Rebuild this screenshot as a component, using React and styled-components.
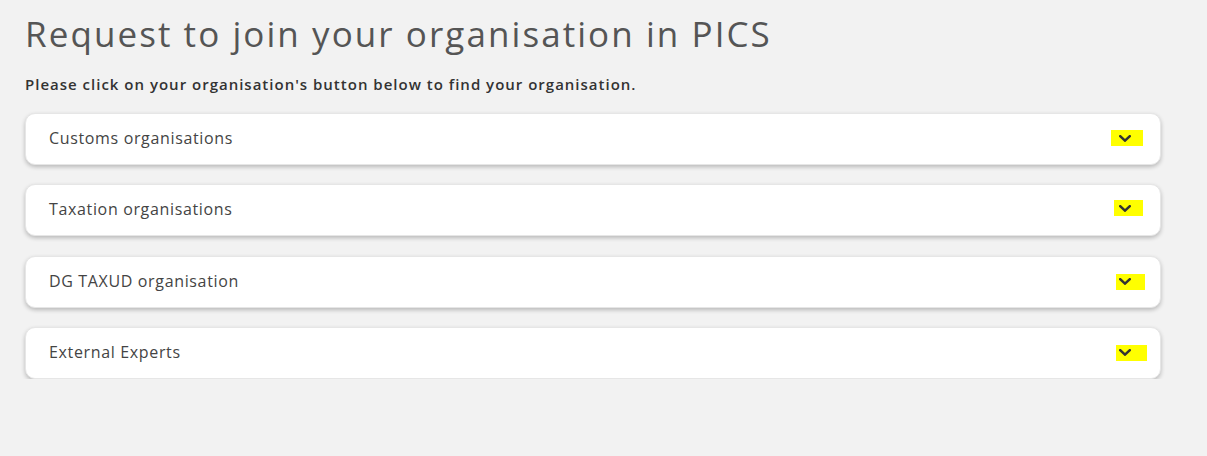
import React from "react";
import styled, { createGlobalStyle } from "styled-components";

const Global = createGlobalStyle`
  html, body { margin: 0; padding: 0; background: #f2f2f2; }
  body { font-family: "Open Sans", "Liberation Sans", sans-serif; }
`;

const Page = styled.main`
  padding: 12px 0 0 25px;
  width: 1136px;
`;

const Title = styled.h1`
  margin: 0;
  font-family: "Open Sans", sans-serif;
  font-weight: 400;
  font-size: 35px;
  line-height: 44px;
  letter-spacing: 2.07px;
  color: #555555;
`;

const Lead = styled.p`
  margin: 18px 0 0;
  font-family: "Open Sans", sans-serif;
  font-weight: 600;
  font-size: 15px;
  line-height: 20px;
  letter-spacing: 1px;
  color: #333333;
`;

const List = styled.div`
  margin-top: 19px;
  display: flex;
  flex-direction: column;
  gap: 19.3px;
`;

const Card = styled.button`
  box-sizing: border-box;
  width: 100%;
  height: 52px;
  display: flex;
  align-items: center;
  justify-content: space-between;
  padding: 0 0 2px 23px;
  background: #ffffff;
  border: 1px solid #e6e6e6;
  border-radius: 10px;
  box-shadow: 0 2px 4px rgba(0, 0, 0, 0.24);
  cursor: pointer;
  text-align: left;
`;

const Label = styled.span`
  font-family: "Open Sans", sans-serif;
  font-weight: 400;
  font-size: 16px;
  letter-spacing: 0.65px;
  color: #444444;
`;

const Mark = styled.span`
  display: flex;
  align-items: center;
  height: 16px;
  background: #ffff00;
  padding: 0 ${(p) => p.$right}px 0 ${(p) => p.$left}px;
  margin-right: ${(p) => 29 - p.$right}px;
  transform: translateY(${(p) => p.$dy}px);
`;

const Chevron = () => (
  <svg width="12" height="7" viewBox="0 0 12 7" aria-hidden="true">
    <polyline
      points="1.2,1.2 6,5.6 10.8,1.2"
      fill="none"
      stroke="#333"
      strokeWidth="2.5"
      strokeLinecap="square"
    />
  </svg>
);

const items = [
  { label: "Customs organisations", left: 8, right: 12, dy: 0 },
  { label: "Taxation organisations", left: 5, right: 12, dy: -1 },
  { label: "DG TAXUD organisation", left: 3, right: 14, dy: 1 },
  { label: "External Experts", left: 3, right: 16, dy: 1 },
];

export default function App() {
  return (
    <>
      <Global />
      <Page>
        <Title>Request to join your organisation in PICS</Title>
        <Lead>Please click on your organisation's button below to find your organisation.</Lead>
        <List>
          {items.map((it) => (
            <Card key={it.label} type="button">
              <Label>{it.label}</Label>
              <Mark $left={it.left} $right={it.right} $dy={it.dy}>
                <Chevron />
              </Mark>
            </Card>
          ))}
        </List>
      </Page>
    </>
  );
}
